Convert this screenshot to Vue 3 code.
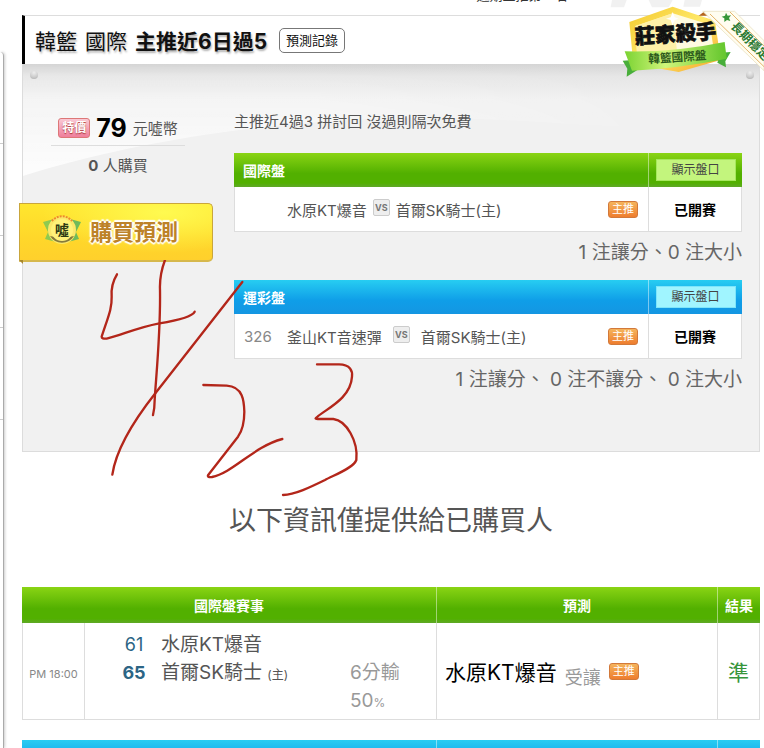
<template>
<div class="page">
    <aside class="side-list">
        <div v-for="n in 4" :key="n" class="side-item"></div>
    </aside>

    <main class="main">
        <div class="rank-strip"><span>近期主推第一名</span></div>

        <!-- 標題 -->
        <header class="title-bar">
            <span class="title-text">韓籃</span>
            <span class="title-text">國際</span>
            <strong class="title-text">主推近6日過5</strong>
            <button type="button" class="record-btn">預測記錄</button>
        </header>

        <section class="panel">
            <svg class="swoosh" viewBox="0 0 738 120" preserveAspectRatio="none">
                <defs>
                    <linearGradient id="shine" x1="0" y1="0" x2="0" y2="1">
                        <stop offset="0" stop-color="#fff" stop-opacity="0" />
                        <stop offset="1" stop-color="#fff" stop-opacity="0.85" />
                    </linearGradient>
                    <linearGradient id="fade" x1="0" y1="0" x2="1" y2="0">
                        <stop offset="0.4" stop-color="#fff" />
                        <stop offset="0.88" stop-color="#000" />
                    </linearGradient>
                    <mask id="fadeRight">
                        <rect width="738" height="120" fill="url(#fade)" />
                    </mask>
                </defs>
                <path d="M0 0H738V64C600 66 560 60 480 56C300 46 120 74 0 112Z" fill="url(#shine)" mask="url(#fadeRight)" />
            </svg>
            <i class="screw left"></i>
            <i class="screw right"></i>

            <div class="buy-col">
                <div class="price-row">
                    <span class="price-tag">特價</span>
                    <b class="price">79</b>
                    <span>元噓幣</span>
                </div>
                <div class="count-row"><b>0</b> 人購買</div>
                <button type="button" class="buy-btn">
                    <svg class="buy-logo" width="40" height="36" viewBox="0 0 40 36">
                        <path d="M1 10L12 7L14 30L3 27L6 20Z" fill="#8fca50" />
                        <path d="M39 10L28 7L26 30L37 27L34 20Z" fill="#6fba5a" />
                        <circle cx="20" cy="18" r="14" fill="#fbe86a" />
                        <path d="M8 24A14 14 0 0 0 32 24L27 25A10 10 0 0 1 13 25Z" fill="#857a3c" />
                        <path d="M10 9A13 13 0 0 1 30 9" fill="none" stroke="#ee8a2c" stroke-width="2" stroke-dasharray="2 1" />
                        <circle cx="20" cy="18" r="11" fill="#fff27a" />
                        <text x="20" y="23" text-anchor="middle" class="logo-text">噓</text>
                    </svg>
                    <span class="buy-label">購買預測</span>
                </button>
            </div>

            <div class="bet-col">
                <p class="slogan">主推近4過3 拼討回 沒過則隔次免費</p>
                <template v-for="board in boards" :key="board.name">
                    <table class="board" :class="board.theme">
                        <thead>
                            <tr>
                                <th colspan="3" class="board-name">{{ board.name }}</th>
                                <th class="col-status"><button type="button" class="show-btn">顯示盤口</button></th>
                            </tr>
                        </thead>
                        <tbody>
                            <tr>
                                <td class="col-no">{{ board.no }}</td>
                                <td>
                                    <div class="match">
                                        <span>{{ board.away }}</span>
                                        <span class="vs">VS</span>
                                        <span>{{ board.home }}</span>
                                    </div>
                                </td>
                                <td><span class="main-tag">主推</span></td>
                                <td class="col-status">已開賽</td>
                            </tr>
                        </tbody>
                    </table>
                    <p class="summary">{{ board.summary }}</p>
                </template>
            </div>
        </section>

        <h2 class="notice">以下資訊僅提供給已購買人</h2>

        <table class="result green">
            <thead>
                <tr>
                    <th colspan="2">國際盤賽事</th>
                    <th>預測</th>
                    <th>結果</th>
                </tr>
            </thead>
            <tbody>
                <tr>
                    <td class="col-time">PM 18:00</td>
                    <td>
                        <div class="score-grid">
                            <span class="score">61</span>
                            <span>水原KT爆音</span>
                            <span></span>
                            <b class="score">65</b>
                            <span>首爾SK騎士 <small>(主)</small></span>
                            <span class="odds">6分輸</span>
                            <span></span>
                            <span></span>
                            <span class="odds">50<small>%</small></span>
                        </div>
                    </td>
                    <td>
                        <div class="pick">
                            <span class="pick-team">水原KT爆音</span>
                            <span class="pick-type">受讓</span>
                            <span class="main-tag">主推</span>
                        </div>
                    </td>
                    <td class="col-result">準</td>
                </tr>
            </tbody>
        </table>

        <table class="result blue">
            <thead>
                <tr>
                    <th colspan="2"></th>
                    <th></th>
                    <th></th>
                </tr>
            </thead>
        </table>
    </main>

    <!-- 莊家殺手徽章 -->
    <svg class="badge" width="164" height="100" viewBox="0 0 492 300">
        <defs>
            <linearGradient id="gold" x1="0" y1="0" x2="1" y2="1">
                <stop offset="0" stop-color="#f4c92c" />
                <stop offset="0.5" stop-color="#ffe96a" />
                <stop offset="1" stop-color="#f5a52a" />
            </linearGradient>
            <linearGradient id="lime" x1="0" y1="0" x2="1" y2="0">
                <stop offset="0" stop-color="#7bd333" />
                <stop offset="0.4" stop-color="#d0f57a" />
                <stop offset="1" stop-color="#62c62c" />
            </linearGradient>
        </defs>
        <path d="M36 0H80L72 22H32ZM146 0H218L206 22H156ZM254 0H306L300 20H250Z" fill="#f1f1f1" />
        <path d="M88 66L218 20L345 62L362 180L236 216L100 192Z" fill="url(#gold)" />
        <path d="M106 78L218 40L330 74L344 168L236 196L112 180Z" fill="#fffbe0" />
        <path d="M218 40L236 196L112 180L106 78Z" fill="#fdeb90" opacity="0.7" />
        <path d="M218 36L224 52L236 56L224 60L218 78L212 60L198 56L212 52Z" fill="#fff" />
        <path d="M68 182L100 180L112 210L80 230L82 206Z" fill="#48ae3a" />
        <path d="M392 156L362 158L352 188L378 202L376 184Z" fill="#48ae3a" />
        <path d="M74 154Q220 158 374 126L380 176Q230 206 96 212Z" fill="url(#lime)" />
        <g transform="rotate(-4 224 100)">
            <text x="226" y="124" text-anchor="middle" class="badge-title">莊家殺手</text>
        </g>
        <g transform="rotate(-4 232 170)">
            <text x="232" y="184" text-anchor="middle" class="badge-sub">韓籃國際盤</text>
        </g>
        <path d="M296 47L314 34L326 47Z" fill="#b5651d" />
        <path d="M308 34H404L492 122V212Z" fill="#fffdf0" stroke="#e6dcb8" stroke-width="2" />
        <path d="M330 42L492 200M390 36L492 138" fill="none" stroke="#e5b56c" stroke-width="3" />
        <path d="M378 38L383 47L393 46L387 54L391 63L381 60L373 66L373 55L365 50L375 47Z" fill="#379638" />
        <g transform="translate(398 74) rotate(45)">
            <text x="0" y="10" class="ribbon-text">長期穩定</text>
        </g>
    </svg>

    <!-- 手寫日期 4/23 -->
    <svg class="ink" width="300" height="250" viewBox="0 0 900 750">
        <path d="M111 43Q92 74 95 110C96 145 86 166 65 230Q65 237 80 236C125 226 165 204 238 190Q335 174 344 155" />
        <path d="M255 0Q238 45 240 90C242 220 228 350 224 420Q224 445 219 465" />
        <path d="M487 66L226 400C166 476 108 570 97 644" />
        <path d="M370 375L440 377C490 380 492 425 493 455C493 490 488 510 474 530L384 646Q382 653 396 651C460 638 520 560 607 537" />
        <path d="M711 313L775 313C812 312 818 335 816 350C812 420 730 450 707 475Q705 477 720 477L760 477C800 482 835 545 829 600C820 625 760 646 735 660C690 682 645 704 609 705" />
    </svg>
</div>
</template>

<script setup>
const boards = [
    {
        name: '國際盤',
        theme: 'green',
        no: '',
        away: '水原KT爆音',
        home: '首爾SK騎士(主)',
        summary: '1 注讓分、0 注大小'
    },
    {
        name: '運彩盤',
        theme: 'blue',
        no: '326',
        away: '釜山KT音速彈',
        home: '首爾SK騎士(主)',
        summary: '1 注讓分、 0 注不讓分、 0 注大小'
    }
]
</script>

<style>
body {
    margin: 0;
    background: #fff;
}
</style>

<style scoped>
.page {
    position: relative;
    display: flex;
    height: 100vh;
    overflow: hidden;
    font-family: Inter, "Noto Sans CJK TC", sans-serif;
    font-size: 15px;
    color: #555;
}
.page * {
    box-sizing: border-box;
}
button {
    font-family: inherit;
    cursor: pointer;
}
p, h2 {
    margin: 0;
}
.side-list {
    flex: none;
    width: 4px;
    margin-top: 52px;
    border-right: 1px solid #aaa;
    border-top-right-radius: 4px;
    box-shadow: 1px 0 3px rgba(0,0,0,0.2);
}
.side-item {
    height: 92px;
    border-bottom: 1px solid #ccc;
}
.main {
    flex: 1;
    min-width: 0;
    padding: 0 4px 0 18px;
}
.rank-strip {
    display: flex;
    justify-content: center;
    height: 15px;
    padding-left: 262px;
    font-size: 13px;
    color: #333;
}
.rank-strip span {
    display: flex;
    align-items: flex-end;
    height: 3px;
    line-height: 16px;
    overflow: hidden;
}

/* 標題列 */
.title-bar {
    display: flex;
    align-items: center;
    gap: 8px;
    height: 49px;
    padding-left: 10px;
    border-top: 1px solid #ddd;
    border-left: 3px solid #000;
    color: #111;
    font-size: 21px;
}
.title-text {
    text-shadow: 1px 2px 2px rgba(0,0,0,0.3);
}
.record-btn {
    height: 25px;
    margin-left: 4px;
    padding: 0 6px;
    border: 1px solid #777;
    border-radius: 5px;
    background: #fff;
    color: #111;
    font-size: 13px;
    line-height: 20px;
}

/* 購買面板 */
.panel {
    position: relative;
    display: flex;
    gap: 21px;
    height: 388px;
    padding-right: 17px;
    border: 1px solid #dcdcdc;
    border-top: 0;
    background: linear-gradient(#d5d5d5, #e6e6e6 12px, #f1f1f1 36px);
}
.swoosh {
    position: absolute;
    top: 0;
    left: 0;
    width: 100%;
    height: 120px;
}
.screw {
    position: absolute;
    top: 7px;
    width: 8px;
    height: 8px;
    border-radius: 50%;
    background: radial-gradient(circle at 50% 20%, #eee, #ccc 60%, #aaa);
}
.screw.left {
    left: 7px;
}
.screw.right {
    right: 5px;
}
.buy-col {
    position: relative;
    flex: none;
    width: 190px;
    padding-top: 46px;
}
.price-row {
    display: flex;
    align-items: center;
    justify-content: center;
    gap: 6px;
    height: 36px;
    margin: 0 28px;
    border-bottom: 1px solid #ddd;
    white-space: nowrap;
}
.price-tag {
    padding: 0 3px;
    border: 1px solid #d77;
    border-radius: 3px;
    background: linear-gradient(#f9c9d4, #ef7f9c);
    color: #fff;
    font-size: 12px;
    font-weight: bold;
    line-height: 18px;
    text-shadow: 0 1px 1px #a33;
}
.price {
    color: #000;
    font-size: 25px;
}
.count-row {
    height: 40px;
    line-height: 40px;
    text-align: center;
}
.buy-btn {
    position: relative;
    display: flex;
    align-items: center;
    gap: 8px;
    width: 194px;
    height: 59px;
    margin: 17px 0 0 -4px;
    padding: 0 0 4px 22px;
    border: 1px solid #c9a63c;
    border-bottom: 2px solid #d6b84c;
    border-radius: 0 5px 5px 0;
    background: radial-gradient(ellipse at 75% 15%, #fffa50, rgba(255,240,60,0) 60%), linear-gradient(#ffe62e, #ffd72a 60%, #ffd02c);
}
.buy-btn::after {
    content: "";
    position: absolute;
    top: 100%;
    left: -1px;
    border-top: 4px solid #a8872c;
    border-left: 4px solid transparent;
}
.buy-logo {
    flex: none;
}
.logo-text {
    font-size: 14px;
    font-weight: bold;
    fill: #2c3a14;
}
.buy-label {
    color: #bd8228;
    font-size: 22px;
    font-weight: bold;
    text-shadow: 0 0 3px #fff, 2px 0 1px #fff, -2px 0 1px #fff, 0 2px 1px #fff, 0 -2px 1px #fff;
}
.bet-col {
    position: relative;
    flex: 1;
    min-width: 0;
    padding-top: 47px;
}
.slogan {
    height: 42px;
    line-height: 22px;
}

/* 表格共用 */
table, thead, tbody {
    display: grid;
}
tr {
    display: grid;
}
th, td {
    display: flex;
    align-items: center;
    padding: 0;
}
th {
    color: #fff;
    font-size: 14px;
}
th + th {
    border-left: 1px solid rgba(255,255,255,0.45);
}
.green thead tr {
    background: linear-gradient(#8ad414, #52b000 60%, #52b000 88%, #5fa827);
}
.blue thead tr {
    background: linear-gradient(#27cdf2, #0f9ee8 60%, #1496e2);
}

/* 盤口 */
.board tr {
    grid-template-columns: 53px 1fr 40px 94px;
}
.board th {
    height: 34px;
}
.board-name {
    grid-column: span 3;
    padding-left: 9px;
}
.board td {
    height: 45px;
    border-bottom: 1px solid #ddd;
    background: #fff;
}
.board .col-no {
    padding-left: 9px;
    border-left: 1px solid #ddd;
    color: #888;
}
.board .col-status {
    justify-content: center;
}
.board td.col-status {
    border-left: 1px solid #ddd;
    border-right: 1px solid #ddd;
    color: #000;
    font-size: 14px;
    font-weight: bold;
}
.match {
    display: flex;
    align-items: center;
    gap: 6px;
    white-space: nowrap;
}
.blue .match {
    gap: 11px;
}
.vs {
    width: 17px;
    margin-bottom: 4px;
    border: 1px solid #ccc;
    border-radius: 2px;
    background: #eee;
    color: #777;
    font-size: 9px;
    font-weight: bold;
    line-height: 15px;
    text-align: center;
}
.main-tag {
    display: inline-block;
    width: 30px;
    border: 1px solid #d2793a;
    border-radius: 3px;
    background: linear-gradient(#f5b45c, #ee7d2e);
    color: #fff;
    font-size: 11px;
    line-height: 15px;
    text-align: center;
}
.show-btn {
    width: 80px;
    height: 22px;
    padding: 0;
    border: 1px solid #a5e85c;
    background: #c3f57d;
    color: #444;
    font-size: 12px;
    line-height: 20px;
}
.blue .show-btn {
    border-color: #7ee6fb;
    background: #a0f5ff;
}
.summary {
    height: 48px;
    line-height: 42px;
    font-size: 19px;
    color: #666;
    text-align: right;
}

.notice {
    padding: 48px 0 46px;
    color: #555;
    font-size: 27px;
    font-weight: normal;
    line-height: 41px;
    text-align: center;
}

/* 賽果 */
.result {
    margin-bottom: 20px;
}
.result tr {
    grid-template-columns: 62px minmax(0, 352fr) minmax(0, 281fr) 43px;
}
.result th {
    justify-content: center;
    height: 36px;
}
.result th:first-child {
    grid-column: span 2;
}
.result td {
    height: 97px;
    border-bottom: 1px solid #ddd;
    border-left: 1px solid #ddd;
}
.result td.col-time {
    justify-content: center;
    padding-top: 6px;
    color: #888;
    font-size: 11px;
}
.score-grid {
    display: grid;
    grid-template-columns: 24px 1fr 86px;
    grid-auto-rows: 28px;
    column-gap: 15px;
    width: 100%;
    padding: 4px 0 0 37px;
    font-size: 19px;
    line-height: 28px;
}
.score-grid small {
    font-size: 12px;
}
.score {
    color: #2c6585;
    font-size: 18px;
    text-align: center;
}
.odds {
    color: #999;
}
.pick {
    display: flex;
    align-items: center;
    gap: 8px;
    padding-left: 8px;
}
.pick-team {
    color: #000;
    font-size: 21px;
}
.pick-type {
    padding-top: 10px;
    color: #999;
    font-size: 18px;
}
.result td.col-result {
    justify-content: center;
    border-right: 1px solid #ddd;
    color: #36953c;
    font-size: 21px;
}

/* 覆蓋層 */
.badge {
    position: absolute;
    top: 0;
    right: 0;
}
.badge-title {
    font-size: 61px;
    font-weight: 900;
    fill: #111;
    stroke: #111;
    stroke-width: 2px;
}
.badge-sub {
    font-size: 35px;
    font-weight: bold;
    fill: #2c5a1c;
}
.ribbon-text {
    font-size: 36px;
    font-weight: bold;
    fill: #2c7a34;
}
.ink {
    position: absolute;
    top: 260px;
    left: 80px;
    pointer-events: none;
}
.ink path {
    fill: none;
    stroke: #b3261a;
    stroke-width: 7;
    stroke-linecap: round;
    stroke-linejoin: round;
}
</style>
